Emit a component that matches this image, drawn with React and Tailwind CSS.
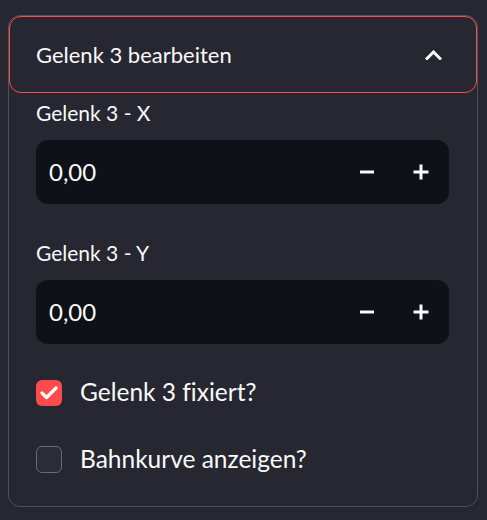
import React from 'react';

const font = { fontFamily: '"Source Sans Pro", Lato, "Noto Sans", sans-serif' };

const NumberInput = ({ label, value }) => (
    <div>
        <div className="h-[30px] flex items-center text-[21px] leading-[30px] text-[#fafafa] mb-3">{label}</div>
        <div className="h-[64px] rounded-xl bg-[#0e1117] flex items-center">
            <span className="flex-1 pl-[13px] text-[24px] text-[#fafafa]">{value}</span>
            <button className="w-[53px] h-full flex items-center justify-center">
                <svg width="15" height="4" viewBox="0 0 15 4"><rect x="0" y="0.5" width="14" height="3" fill="#fafafa" /></svg>
            </button>
            <button className="w-[53px] h-full flex items-center justify-center mr-[2px]">
                <svg width="16" height="16" viewBox="0 0 16 16">
                    <rect x="0.5" y="6.5" width="15" height="3" fill="#fafafa" />
                    <rect x="6.5" y="0.5" width="3" height="15" fill="#fafafa" />
                </svg>
            </button>
        </div>
    </div>
);

const Checkbox = ({ checked, label }) => (
    <label className="flex items-center gap-[18px] h-[27px]">
        {checked ? (
            <span className="w-[26px] h-[26px] rounded-md bg-[#ff4b4b] flex items-center justify-center">
                <svg width="18" height="14" viewBox="0 0 18 14" fill="none">
                    <polyline points="2,7 6.5,11.5 16,2" stroke="#ffffff" strokeWidth="3.2" strokeLinecap="round" strokeLinejoin="round" />
                </svg>
            </span>
        ) : (
            <span className="w-[26px] h-[27px] rounded-md bg-[#2b2d36] border border-[#6b6c73]"></span>
        )}
        <span className="text-[24.5px] text-[#fafafa] leading-none">{label}</span>
    </label>
);

export default function App() {
    return (
        <div className="min-h-[520px] bg-[#262730] pt-[15px] pl-2 pr-[9px] [font-variant-ligatures:none]" style={font}>
            <div className="rounded-xl border border-[#4f5058]">
                <div className="h-[77px] rounded-xl border border-[#ff4b4b] flex items-center justify-between pl-[26px] pr-[34px]">
                    <span className="text-[22px] text-[#fafafa]">Gelenk 3 bearbeiten</span>
                    <svg width="17" height="10" viewBox="0 0 17 10" fill="none">
                        <polyline points="2,8.5 8.5,2 15,8.5" stroke="#fafafa" strokeWidth="3" strokeLinecap="square" />
                    </svg>
                </div>
                <div className="pl-[27px] pr-[28px] pt-[5px] pb-[33px]">
                    <NumberInput label="Gelenk 3 - X" value="0,00" />
                    <div className="mt-[34px]">
                        <NumberInput label="Gelenk 3 - Y" value="0,00" />
                    </div>
                    <div className="mt-[35px] flex flex-col gap-[40px]">
                        <Checkbox checked label="Gelenk 3 fixiert?" />
                        <Checkbox label="Bahnkurve anzeigen?" />
                    </div>
                </div>
            </div>
        </div>
    );
}
